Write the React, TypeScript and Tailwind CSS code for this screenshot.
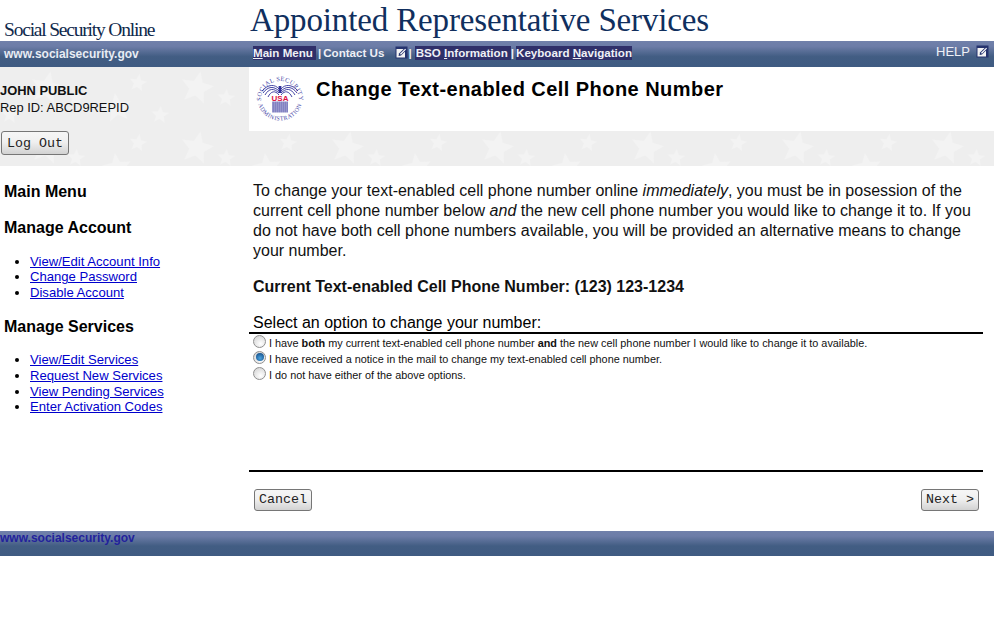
import React from "react";

function starPoints(cx: number, cy: number, r: number, rot: number) {
  const pts: string[] = [];
  for (let i = 0; i < 10; i++) {
    const rad = i % 2 === 0 ? r : r * 0.46;
    const a = ((-90 + rot + i * 36) * Math.PI) / 180;
    pts.push(`${(cx + rad * Math.cos(a)).toFixed(1)},${(cy + rad * Math.sin(a)).toFixed(1)}`);
  }
  return pts.join(" ");
}

const tileStars: [number, number, number, number][] = [
  [47, 21, 17, 12],
  [138, 16, 9, 10],
  [76, 31, 9, 5],
  [117, 41, 15, -8],
  [10, 48, 9, 5],
  [160, 48, 9, 5],
];

function StarBackground() {
  return (
    <svg className="absolute inset-0 w-full h-full" aria-hidden="true">
      <defs>
        <pattern id="stars" width="150" height="60" patternUnits="userSpaceOnUse">
          {tileStars.map(([x, y, r, rot], i) => (
            <polygon key={i} points={starPoints(x, y, r, rot)} fill="#f3f3f3" />
          ))}
        </pattern>
      </defs>
      <rect width="100%" height="100%" fill="url(#stars)" />
    </svg>
  );
}

function ExtIcon() {
  return (
    <svg width="13" height="13" viewBox="0 0 13 13" className="shrink-0">
      <rect x="0.5" y="0.5" width="12" height="12" fill="#25336e" />
      <rect x="1.5" y="3" width="8.5" height="8.5" fill="#f4f4f4" />
      <path d="M4 7.5 L10.2 1.5 L12.2 3.4 L6 9.6 L3.6 10 Z" fill="#25336e" />
      <path d="M5 7.8 L10.2 2.7 L11 3.5 L5.9 8.7 Z" fill="#ffffff" />
    </svg>
  );
}

function Seal() {
  return (
    <svg width="50" height="50" viewBox="0 0 50 50" className="shrink-0">
      <defs>
        <path id="sealTop" d="M6 27 A19 19 0 0 1 44 27" />
        <path id="sealBottom" d="M2.5 25 A22.5 22.5 0 0 0 47.5 25" />
      </defs>
      <text fontFamily="'Liberation Serif', serif" fontSize="6.4" fill="#4a4aa8" letterSpacing="0.35">
        <textPath href="#sealTop" startOffset="50%" textAnchor="middle">SOCIAL SECURITY</textPath>
      </text>
      <text fontFamily="'Liberation Serif', serif" fontSize="6" fill="#4a4aa8" letterSpacing="0.45">
        <textPath href="#sealBottom" startOffset="50%" textAnchor="middle">ADMINISTRATION</textPath>
      </text>
      <g stroke="#30309a" strokeWidth="0.9" fill="none">
        <path d="M24 16 C20 11 13 11 7 18" />
        <path d="M24 18 C19 13 13 13 8 20" />
        <path d="M24 20 C19 15 14 15 10 22" />
        <path d="M24 22 C20 17 16 18 13 24" />
        <path d="M26 16 C30 11 37 11 43 18" />
        <path d="M26 18 C31 13 37 13 42 20" />
        <path d="M26 20 C31 15 36 15 40 22" />
        <path d="M26 22 C30 17 34 18 37 24" />
      </g>
      <rect x="23.6" y="13" width="2.8" height="7" fill="#30309a" />
      <text x="25" y="27.5" textAnchor="middle" fontFamily="'Liberation Sans', sans-serif" fontWeight="bold" fontSize="8" fill="#dd1144">USA</text>
      <g fill="#30309a">
        {[17.5, 19.5, 21.5, 23.5, 25.5, 27.5, 29.5, 31.5].map((x) => (
          <rect key={x} x={x} y="28.5" width="1.1" height="11" />
        ))}
      </g>
    </svg>
  );
}

function Radio({ checked }: { checked?: boolean }) {
  return (
    <span className="w-[13px] h-[13px] -translate-y-[2px] rounded-full border border-[#8f8f8f] bg-[radial-gradient(circle_at_60%_70%,#ffffff,#cfcfcf)] flex items-center justify-center shrink-0">
      {checked && <span className="w-[8px] h-[8px] rounded-full bg-[radial-gradient(circle_at_50%_65%,#4aa3e0,#0b3f78)]" />}
    </span>
  );
}

function Btn({ children, className = "" }: { children: React.ReactNode; className?: string }) {
  return (
    <button className={`h-[22px] border border-[#767676] rounded-[3px] bg-[linear-gradient(#f6f6f6,#f0f0f0_45%,#d2d2d2)] font-['Liberation_Mono',monospace] text-[13.33px] text-[#222] ${className}`}>
      {children}
    </button>
  );
}

function NavHi({ children, className = "" }: { children: React.ReactNode; className?: string }) {
  return <span className={`bg-[#2f2f69] ${className}`}>{children}</span>;
}

function SideLinks({ items }: { items: string[] }) {
  return (
    <ul className="list-disc pl-[30px] text-[13.1px] leading-[15.67px] -mt-[0.3px]">
      {items.map((t) => (
        <li key={t}>
          <a href="#" className="text-[#0000cc] underline">{t}</a>
        </li>
      ))}
    </ul>
  );
}

const barClass = "bg-[linear-gradient(#7080aa,#6d7da8_20%,#425d83_60%,#3f5b82)]";

export default function App() {
  return (
    <div className="w-[994px] h-[640px] bg-white font-['Liberation_Sans',Arial,sans-serif] text-black overflow-hidden">
      <header className="h-[41px] flex">
        <div className="w-[249px] pl-[4px] pt-[18px] font-['Liberation_Serif',serif] text-[19.5px] leading-[23px] tracking-[-1.2px] text-[#102a4c]">
          Social Security Online
        </div>
        <div className="pl-[1px] pt-[1px] font-['Liberation_Serif',serif] text-[33px] leading-[38px] tracking-[-0.14px] text-[#102f5e]">
          Appointed Representative Services
        </div>
      </header>

      <div className={`h-[26px] flex text-white ${barClass}`}>
        <div className="w-[249px] pl-[4px] pt-[5px] text-[12px] leading-[16px] font-bold text-[#e8ecf4]">
          www.socialsecurity.gov
        </div>
        <div className="flex-1 flex items-start pt-[5px] pl-[4px] text-[11.6px] leading-[14px] font-bold text-[#eef0f6] whitespace-nowrap">
          <NavHi className="pr-[3px]"><u>M</u>ain Menu</NavHi>
          <span className="mx-[2px]">|</span>
          <span>Contact Us</span>
          <span className="ml-[11px]"><ExtIcon /></span>
          <span className="mr-[3px]">|</span>
          <NavHi className="pl-[1px] pr-[3px]">BSO <u>I</u>nformation</NavHi>
          <span className="mr-[2px]">|</span>
          <NavHi>Keyboard <u>N</u>avigation</NavHi>
          <span className="ml-auto mr-[5px] flex items-start gap-[6px] font-normal text-[13px] -mt-[1px]">
            HELP <ExtIcon />
          </span>
        </div>
      </div>

      <div className="relative h-[99px] bg-[#eeeeee] flex">
        <StarBackground />
        <div className="relative w-[249px] pt-[15px] text-[12.9px] leading-[17px] text-[#111]">
          <div className="font-bold">JOHN PUBLIC</div>
          <div>Rep ID: ABCD9REPID</div>
          <Btn className="mt-[15px] ml-[1px] w-[68px] !h-[24px]">Log Out</Btn>
        </div>
        <div className="relative flex-1 h-[64px] bg-white flex pl-[6px] pt-[6px]">
          <Seal />
          <h1 className="ml-[11px] pt-[4px] text-[20px] leading-[24px] font-bold tracking-[0.45px]">
            Change Text-enabled Cell Phone Number
          </h1>
        </div>
      </div>

      <div className="h-[365px] flex">
        <nav className="w-[249px]">
          <h2 className="pl-[4px] pt-[16px] text-[16px] leading-[19px] font-bold">Main Menu</h2>
          <h2 className="pl-[4px] mt-[17px] text-[16px] leading-[19px] font-bold">Manage Account</h2>
          <div className="mt-[17px]">
            <SideLinks items={["View/Edit Account Info", "Change Password", "Disable Account"]} />
          </div>
          <h2 className="pl-[4px] mt-[16px] text-[16px] leading-[19px] font-bold">Manage Services</h2>
          <div className="mt-[17px]">
            <SideLinks items={["View/Edit Services", "Request New Services", "View Pending Services", "Enter Activation Codes"]} />
          </div>
        </nav>
        <main className="flex-1 pr-[11px] flex flex-col">
          <div className="pl-[4px] pt-[15px] text-[16px] leading-[20px] text-[#111]">
            <p>
              To change your text-enabled cell phone number online <i>immediately</i>, you must be in posession of the current cell phone number below <i>and</i> the new cell phone number you would like to change it to. If you do not have both cell phone numbers available, you will be provided an alternative means to change your number.
            </p>
            <p className="mt-[16px] font-bold">Current Text-enabled Cell Phone Number: (123) 123-1234</p>
          </div>
          <div className="mt-[16px] pl-[4px] border-b-2 border-black text-[16px] leading-[19px] h-[21px]">
            Select an option to change your number:
          </div>
          <div className="pl-[4px] pt-[1px] text-[10.87px] leading-[16px] text-[#111]">
            <label className="flex items-center gap-[3px] h-[16px]">
              <Radio />
              <span>I have <b>both</b> my current text-enabled cell phone number <b>and</b> the new cell phone number I would like to change it to available.</span>
            </label>
            <label className="flex items-center gap-[3px] h-[16px]">
              <Radio checked />
              <span>I have received a notice in the mail to change my text-enabled cell phone number.</span>
            </label>
            <label className="flex items-center gap-[3px] h-[16px]">
              <Radio />
              <span>I do not have either of the above options.</span>
            </label>
          </div>
          <div className="mt-[87px] border-t-2 border-black pt-[17px] flex justify-between pl-[5px] pr-[4px]">
            <Btn className="w-[58px]">Cancel</Btn>
            <Btn className="w-[58px]">Next &gt;</Btn>
          </div>
        </main>
      </div>

      <footer className={`h-[25px] ${barClass}`}>
        <a href="#" className="block text-[12px] leading-[14px] font-bold text-[#22229c]">www.socialsecurity.gov</a>
      </footer>
    </div>
  );
}
